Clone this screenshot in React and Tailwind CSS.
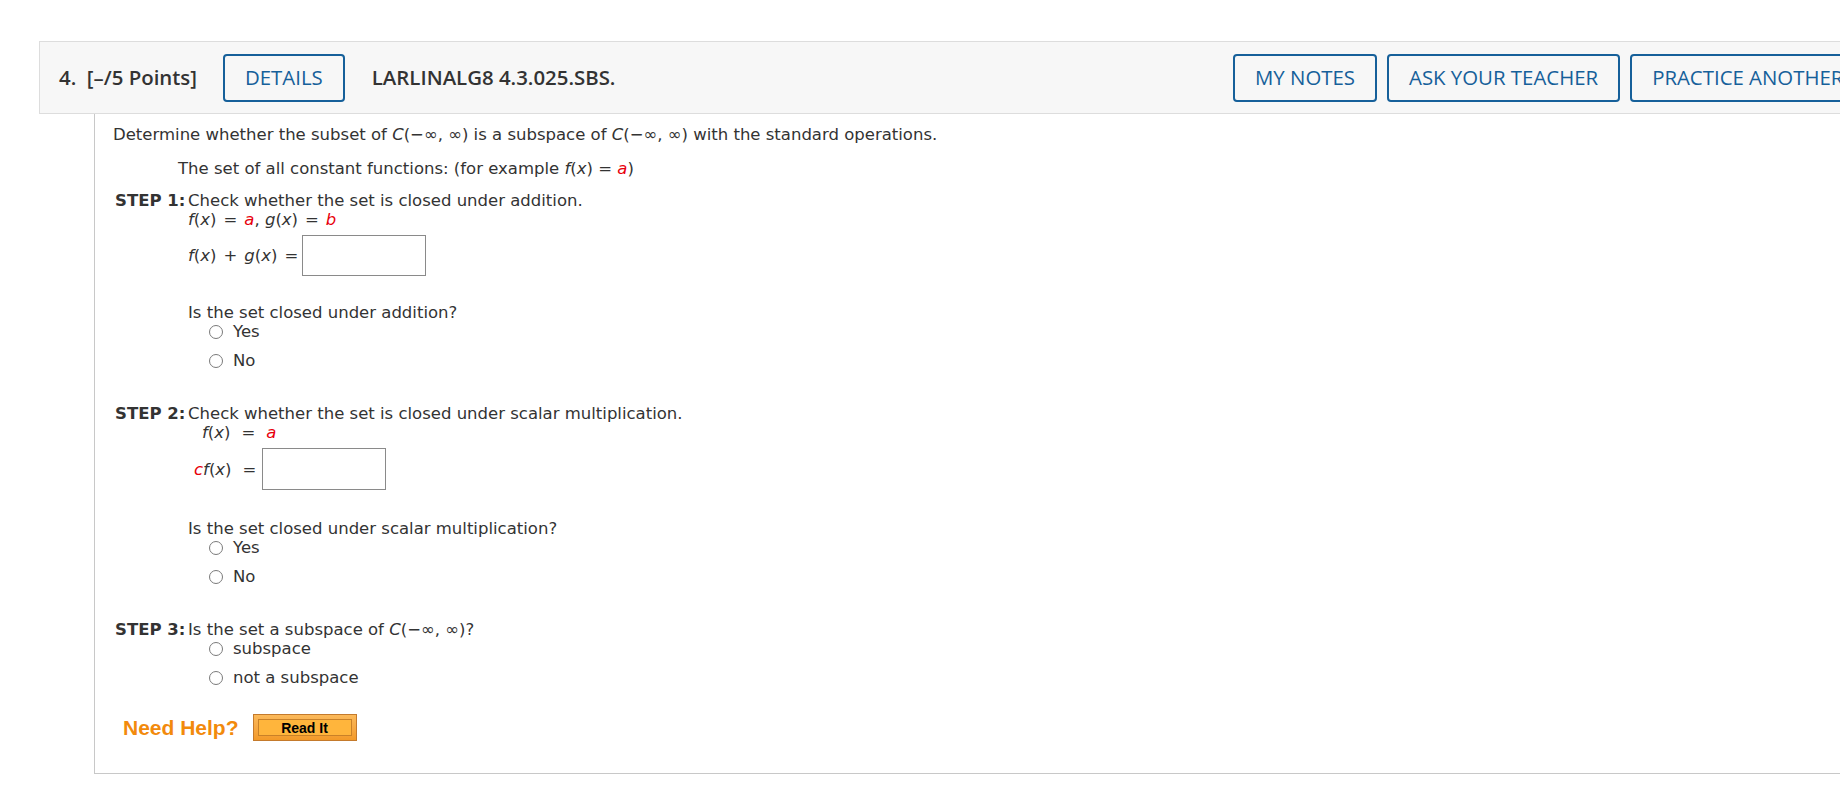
import React from "react";

const R = ({ children }) => <i className="text-[#e8000b]">{children}</i>;
const I = ({ children }) => <i>{children}</i>;
const Op = ({ children }) => <span className="px-[7px]">{children}</span>;

function Radio({ label }) {
  return (
    <div className="flex h-[19px] items-center">
      <span className="ml-[21px] block h-[14px] w-[14px] shrink-0 rounded-full border border-[#7a7a7a] bg-white" />
      <span className="ml-[10px]">{label}</span>
    </div>
  );
}

function Radios({ a, b }) {
  return (
    <div className="flex flex-col gap-[10px]">
      <Radio label={a} />
      <Radio label={b} />
    </div>
  );
}

function HeaderButton({ children }) {
  return (
    <div className="flex h-[48px] shrink-0 items-center rounded-[4px] border-2 border-[#16609a] px-[20px] text-[#16609a]">
      {children}
    </div>
  );
}

export default function App() {
  return (
    <div className="h-[800px] w-[1840px] overflow-hidden bg-white">
      <div className="pl-[39px] pt-[41px]">
        <div className="flex h-[73px] items-center border-y border-l border-[#dddddd] bg-[#f7f7f7] pl-[19px] font-['Open_Sans',sans-serif] text-[20.4px] text-[#333]">
          <div className="flex w-[1174px] shrink-0 items-center">
            <span className="shrink-0 font-semibold">4.&nbsp; [–/5 Points]</span>
            <div className="ml-[26px]">
              <HeaderButton>DETAILS</HeaderButton>
            </div>
            <span className="ml-[27px] shrink-0 font-semibold">LARLINALG8 4.3.025.SBS.</span>
          </div>
          <div className="flex shrink-0 gap-[10px]">
            <HeaderButton>MY NOTES</HeaderButton>
            <HeaderButton>ASK YOUR TEACHER</HeaderButton>
            <HeaderButton>PRACTICE ANOTHER</HeaderButton>
          </div>
        </div>

        <div className="ml-[55px] border-b border-l border-[#c8c8c8] pb-[32px] pl-[18px] pt-[11px] font-['DejaVu_Sans',Verdana,sans-serif] text-[16.5px] leading-[19px] text-[#333]">
          <p className="whitespace-nowrap">
            Determine whether the subset of <I>C</I>(−∞, ∞) is a subspace of <I>C</I>(−∞, ∞) with the standard operations.
          </p>
          <p className="ml-[65px] mt-[15px] whitespace-nowrap">
            The set of all constant functions: (for example <I>f</I>(<I>x</I>) = <R>a</R>)
          </p>

          {/* STEP 1 */}
          <div className="mt-[13px] flex">
            <b className="ml-[2px] w-[73px] shrink-0 font-bold">STEP 1:</b>
            <div className="flex flex-col">
              <div className="whitespace-nowrap">Check whether the set is closed under addition.</div>
              <div className="whitespace-nowrap">
                <I>f</I>(<I>x</I>)<Op>=</Op><R>a</R>, <I>g</I>(<I>x</I>)<Op>=</Op><R>b</R>
              </div>
              <div className="mt-[6px] flex h-[41px] items-center">
                <span className="w-[114px] shrink-0 whitespace-nowrap">
                  <I>f</I>(<I>x</I>)<Op>+</Op><I>g</I>(<I>x</I>)<Op>=</Op>
                </span>
                <div className="h-[41px] w-[124px] border border-[#8a8a8a] bg-white" />
              </div>
              <div className="mt-[27px] whitespace-nowrap">Is the set closed under addition?</div>
              <Radios a="Yes" b="No" />
            </div>
          </div>

          {/* STEP 2 */}
          <div className="mt-[34px] flex">
            <b className="ml-[2px] w-[73px] shrink-0 font-bold">STEP 2:</b>
            <div className="flex flex-col">
              <div className="whitespace-nowrap">Check whether the set is closed under scalar multiplication.</div>
              <div className="ml-[14px] whitespace-nowrap">
                <I>f</I>(<I>x</I>)<span className="px-[11px]">=</span><R>a</R>
              </div>
              <div className="mt-[6px] flex h-[42px] items-center">
                <span className="ml-[6px] w-[68px] shrink-0 whitespace-nowrap">
                  <R>c</R>
                  <I>f</I>(<I>x</I>)<span className="pl-[11px]">=</span>
                </span>
                <div className="h-[42px] w-[124px] border border-[#8a8a8a] bg-white" />
              </div>
              <div className="mt-[29px] whitespace-nowrap">Is the set closed under scalar multiplication?</div>
              <Radios a="Yes" b="No" />
            </div>
          </div>

          {/* STEP 3 */}
          <div className="mt-[34px] flex">
            <b className="ml-[2px] w-[73px] shrink-0 font-bold">STEP 3:</b>
            <div className="flex flex-col">
              <div className="whitespace-nowrap">
                Is the set a subspace of <I>C</I>(−∞, ∞)?
              </div>
              <Radios a="subspace" b="not a subspace" />
            </div>
          </div>

          <div className="ml-[10px] mt-[27px] flex h-[27px] items-center">
            <span className="font-['Liberation_Sans',Arial,sans-serif] text-[21px] font-bold text-[#f28a0c]">Need Help?</span>
            <div className="ml-[14px] flex h-[27px] w-[104px] items-center justify-center border border-[#c47a2c] bg-gradient-to-b from-[#fbb95a] to-[#f39a28]">
              <div className="flex h-[17px] w-[94px] items-center justify-center border border-[#c98128] bg-[#ffb53c] font-['Liberation_Sans',Arial,sans-serif] text-[14px] font-bold leading-none text-black">
                Read It
              </div>
            </div>
          </div>
        </div>
      </div>
    </div>
  );
}
